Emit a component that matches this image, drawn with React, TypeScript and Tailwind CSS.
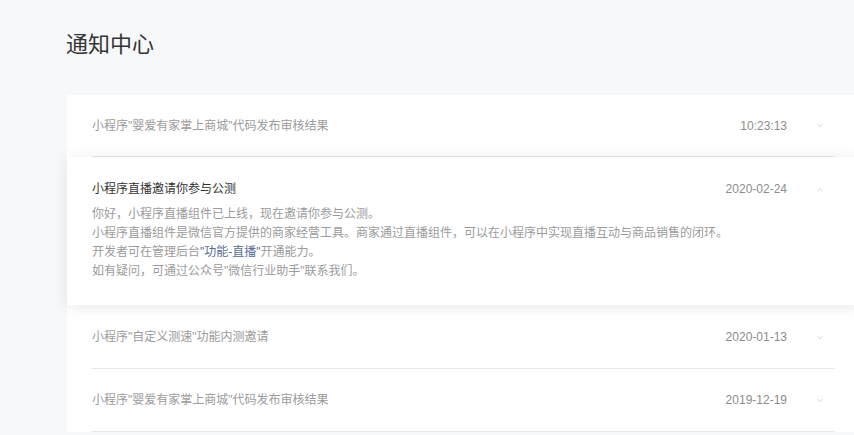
import React from 'react';

type Notice = {
  title: string;
  time: string;
};

const font = "font-['Liberation_Sans','Noto_Sans_CJK_SC',sans-serif]";

const Chevron = ({ up }: { up?: boolean }) => (
  <svg width="8" height="5" viewBox="0 0 8 5" className="ml-[29px] mr-[11px] shrink-0">
    <path
      d={up ? 'M1.5 3.8L4 1.5L6.5 3.8' : 'M1.5 1.2L4 3.5L6.5 1.2'}
      fill="none"
      stroke="#d6d6d6"
      strokeWidth="1"
    />
  </svg>
);

const Row = ({ title, time, tall }: Notice & { tall?: boolean }) => (
  <div className="px-[25px] bg-white">
    <div className={`${tall ? 'h-[63px]' : 'h-[62px]'} flex items-center border-b border-[#e8e8e8]`}>
      <span className="flex-1 text-[12px] text-[#9b9b9b]">{title}</span>
      <span className="text-[12px] text-[#8c8c8c]">{time}</span>
      <Chevron />
    </div>
  </div>
);

const App = () => {
  return (
    <div className={`min-h-[435px] h-[435px] overflow-hidden bg-[#f7f8fa] ${font}`}>
      <div className="pl-[66px] pt-[32px] h-[95px]">
        <h1 className="text-[22px] leading-[26px] text-[#353535]">通知中心</h1>
      </div>

      <div className="pl-[67px]">
        <div className="mr-[-6px] bg-white">
          <Row title={'小程序"婴爱有家掌上商城"代码发布审核结果'} time="10:23:13" />

          {/* expanded notice */}
          <div className="relative bg-white px-[25px] pt-[23px] pb-[24px] shadow-[0_2px_14px_rgba(0,0,0,0.09)] z-10">
            <div className="flex items-center h-[18px]">
              <span className="flex-1 text-[12px] text-[#333333]">小程序直播邀请你参与公测</span>
              <span className="text-[12px] text-[#8c8c8c]">2020-02-24</span>
              <Chevron up />
            </div>
            <div className="mt-[7px] text-[12px] leading-[19px] text-[#9b9b9b]">
              <p>你好，小程序直播组件已上线，现在邀请你参与公测。</p>
              <p>小程序直播组件是微信官方提供的商家经营工具。商家通过直播组件，可以在小程序中实现直播互动与商品销售的闭环。</p>
              <p>
                开发者可在管理后台<span className="text-[#576b95]">"功能-直播"</span>开通能力。
              </p>
              <p>如有疑问，可通过公众号"微信行业助手"联系我们。</p>
            </div>
          </div>

          <div className="pt-[1px] bg-white">
            <Row title={'小程序"自定义测速"功能内测邀请'} time="2020-01-13" tall />
          </div>
          <Row title={'小程序"婴爱有家掌上商城"代码发布审核结果'} time="2019-12-19" tall />
        </div>
      </div>
    </div>
  );
};

export default App;
